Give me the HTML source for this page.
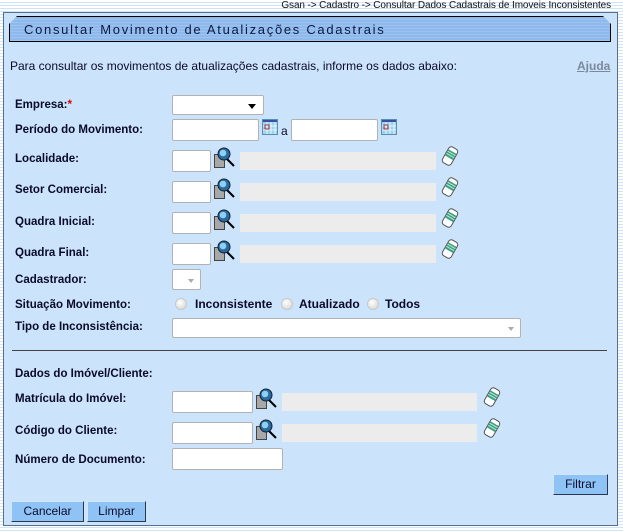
<!DOCTYPE html>
<html><head><meta charset="utf-8"><style>
*{margin:0;padding:0;box-sizing:border-box}
body{width:623px;height:532px;overflow:hidden;position:relative;font-family:"Liberation Sans",Arial,sans-serif;
background:repeating-linear-gradient(#fff 0 2px,#cfe4fa 2px 3px);}
.a{position:absolute}
#panel{left:3px;top:12px;width:615px;height:514px;background:#cbe3fb;border:1px solid #5a6f86}
#title{left:9px;top:16px;width:602px;height:26px;border:1px solid #000;background:repeating-linear-gradient(#8fb9ec 0 2px,#9dc3ef 2px 3px);
clip-path:polygon(8px 0,calc(100% - 8px) 0,100% 8px,100% 100%,0 100%,0 8px);}
#title span{position:absolute;left:14px;top:5px;font-size:13px;letter-spacing:1.7px;color:#0b1a40}
.l{position:absolute;left:15px;font-size:12px;font-weight:bold;color:#0a0a2a;white-space:nowrap;transform:scaleX(0.96);transform-origin:left}
.i{position:absolute;background:#fff;border:1px solid #b2b2b2;border-radius:2px}
.g{position:absolute;background:#ececec;height:18px}
.btn{position:absolute;background:#8fc3f6;border:1px solid #2a3550;border-top-color:#cfe6ff;border-left-color:#cfe6ff;font-size:12px;color:#0a0a2a;text-align:center;line-height:19px}
.r{position:absolute;width:12px;height:12px;border-radius:50%;background:radial-gradient(circle at 40% 35%,#fff,#d0d0d0);border:1px solid #c8c8c8}
</style></head><body>
<div class="a" style="right:12px;top:0;font-size:10px;color:#111;letter-spacing:-0.1px">Gsan -&gt; Cadastro -&gt; Consultar Dados Cadastrais de Imoveis Inconsistentes</div>
<div id="panel" class="a"></div>
<div id="title" class="a"><span>Consultar Movimento de Atualizações Cadastrais</span></div>
<div class="a" style="left:10px;top:59px;font-size:12px;color:#0a0a2a">Para consultar os movimentos de atualizações cadastrais, informe os dados abaixo:</div>
<div class="a" style="left:577px;top:59px;font-size:12px;font-weight:bold;color:#7b8a9a;text-decoration:underline">Ajuda</div>

<div class="l" style="top:97px">Empresa:<span style="color:#d00">*</span></div>
<div class="i" style="left:172px;top:95px;width:92px;height:20px"><div class="a" style="right:7px;top:8px;border:4px solid transparent;border-top:5px solid #000;border-bottom:0"></div></div>

<div class="l" style="top:122px">Período do Movimento:</div>
<div class="i" style="left:172px;top:119px;width:87px;height:22px"></div>
<svg class="a" style="left:262px;top:119px" width="16" height="16"><rect x="0.5" y="0.5" width="15" height="15" fill="#9cd3ee" stroke="#5a8fb0"/><rect x="1" y="1" width="14" height="2" fill="#3a4fa0"/><path d="M1 7h14M1 11h14M5 3v12M9 3v12M13 3v12" stroke="#e6f6ff"/><rect x="3" y="6" width="4" height="4" fill="none" stroke="#a03040"/></svg>
<div class="a" style="left:281px;top:124px;font-size:12px;color:#0a0a2a">a</div>
<div class="i" style="left:291px;top:119px;width:87px;height:22px"></div>
<svg class="a" style="left:381px;top:119px" width="16" height="16"><rect x="0.5" y="0.5" width="15" height="15" fill="#9cd3ee" stroke="#5a8fb0"/><rect x="1" y="1" width="14" height="2" fill="#3a4fa0"/><path d="M1 7h14M1 11h14M5 3v12M9 3v12M13 3v12" stroke="#e6f6ff"/><rect x="3" y="6" width="4" height="4" fill="none" stroke="#a03040"/></svg>

<div class="l" style="top:151px">Localidade:</div>
<div class="l" style="top:182px">Setor Comercial:</div>
<div class="l" style="top:214px">Quadra Inicial:</div>
<div class="l" style="top:245px">Quadra Final:</div>

<div class="i" style="left:172px;top:150px;width:39px;height:22px"></div>
<div class="i" style="left:172px;top:181px;width:39px;height:22px"></div>
<div class="i" style="left:172px;top:212px;width:39px;height:22px"></div>
<div class="i" style="left:172px;top:243px;width:39px;height:22px"></div>
<div class="g" style="left:240px;top:152px;width:196px"></div>
<div class="g" style="left:240px;top:183px;width:196px"></div>
<div class="g" style="left:240px;top:214px;width:196px"></div>
<div class="g" style="left:240px;top:245px;width:196px"></div>

<svg width="0" height="0" style="position:absolute"><defs>
<g id="lupa"><rect x="0.5" y="7.5" width="10" height="13" fill="#a8a8a8" stroke="#444"/><path d="M12 11l8 8" stroke="#000" stroke-width="2"/><circle cx="10" cy="7" r="6" fill="#2a6aa0" stroke="#123" stroke-width="1"/><circle cx="9" cy="6" r="3.3" fill="#8fd0f0"/></g>
<g id="er"><g transform="rotate(30 9 10)"><rect x="4" y="1" width="10" height="18" rx="3" fill="#fff" stroke="#555"/><rect x="4.5" y="5" width="9" height="7" fill="#3aa080"/><path d="M4.5 7h9M4.5 9.5h9" stroke="#bfe8d8"/></g></g>
</defs></svg>
<svg class="a" style="left:214px;top:147px" width="24" height="24"><use href="#lupa"/></svg>
<svg class="a" style="left:214px;top:178px" width="24" height="24"><use href="#lupa"/></svg>
<svg class="a" style="left:214px;top:209px" width="24" height="24"><use href="#lupa"/></svg>
<svg class="a" style="left:214px;top:240px" width="24" height="24"><use href="#lupa"/></svg>
<svg class="a" style="left:441px;top:146px" width="20" height="22"><use href="#er"/></svg>
<svg class="a" style="left:441px;top:177px" width="20" height="22"><use href="#er"/></svg>
<svg class="a" style="left:441px;top:208px" width="20" height="22"><use href="#er"/></svg>
<svg class="a" style="left:441px;top:239px" width="20" height="22"><use href="#er"/></svg>

<div class="l" style="top:272px">Cadastrador:</div>
<div class="i" style="left:172px;top:269px;width:29px;height:21px"><div class="a" style="right:6px;top:9px;border:3px solid transparent;border-top:4px solid #aaa;border-bottom:0"></div></div>

<div class="l" style="top:297px">Situação Movimento:</div>
<div class="r" style="left:175px;top:298px"></div>
<div class="a" style="left:195px;top:297px;font-size:12px;font-weight:bold;color:#0a0a2a">Inconsistente</div>
<div class="r" style="left:281px;top:298px"></div>
<div class="a" style="left:299px;top:297px;font-size:12px;font-weight:bold;color:#0a0a2a">Atualizado</div>
<div class="r" style="left:367px;top:298px"></div>
<div class="a" style="left:385px;top:297px;font-size:12px;font-weight:bold;color:#0a0a2a">Todos</div>

<div class="l" style="top:319px">Tipo de Inconsistência:</div>
<div class="i" style="left:172px;top:318px;width:349px;height:20px"><div class="a" style="right:6px;top:8px;border:3px solid transparent;border-top:4px solid #aaa;border-bottom:0"></div></div>

<div class="a" style="left:12px;top:350px;width:595px;height:1px;background:#444"></div>

<div class="l" style="top:366px">Dados do Imóvel/Cliente:</div>
<div class="l" style="top:391px">Matrícula do Imóvel:</div>
<div class="l" style="top:423px">Código do Cliente:</div>
<div class="l" style="top:452px">Número de Documento:</div>
<div class="i" style="left:172px;top:391px;width:81px;height:22px"></div>
<div class="i" style="left:172px;top:422px;width:81px;height:22px"></div>
<div class="i" style="left:172px;top:448px;width:111px;height:22px"></div>
<div class="g" style="left:282px;top:393px;width:195px"></div>
<div class="g" style="left:282px;top:424px;width:195px"></div>
<svg class="a" style="left:256px;top:388px" width="24" height="24"><use href="#lupa"/></svg>
<svg class="a" style="left:256px;top:419px" width="24" height="24"><use href="#lupa"/></svg>
<svg class="a" style="left:483px;top:387px" width="20" height="22"><use href="#er"/></svg>
<svg class="a" style="left:483px;top:418px" width="20" height="22"><use href="#er"/></svg>

<div class="btn" style="left:553px;top:474px;width:55px;height:21px">Filtrar</div>
<div class="btn" style="left:11px;top:501px;width:73px;height:21px">Cancelar</div>
<div class="btn" style="left:87px;top:501px;width:59px;height:21px">Limpar</div>
</body></html>
